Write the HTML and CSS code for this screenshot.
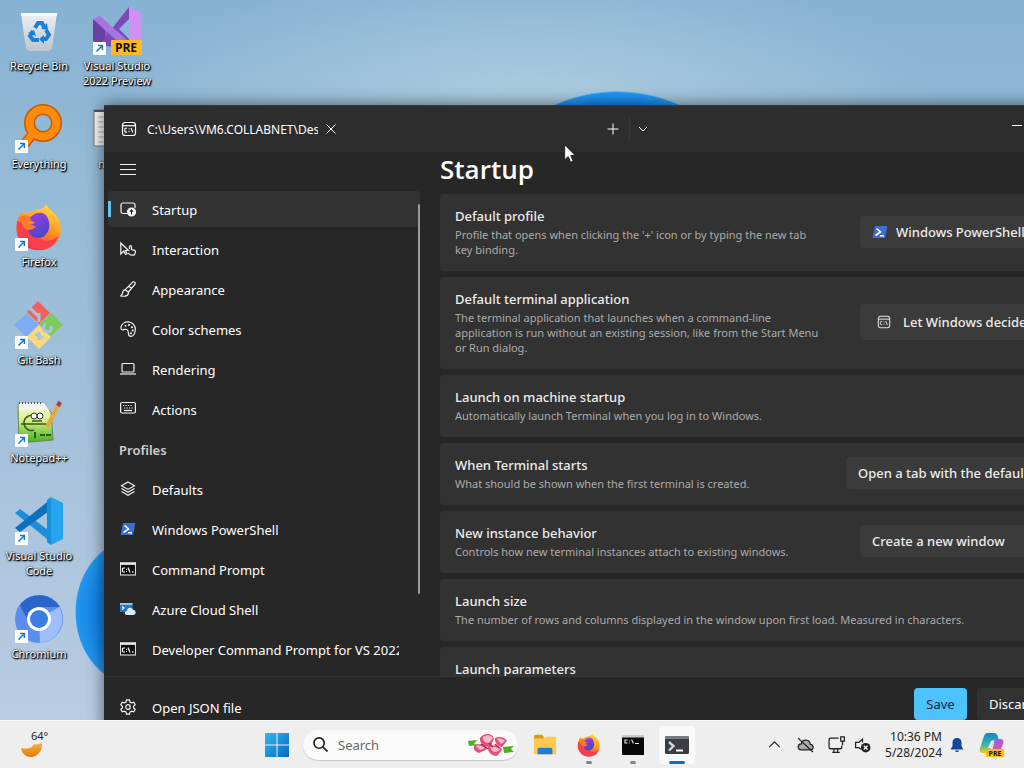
FILE: index.html
```html
<!DOCTYPE html>
<html lang="en">
<head>
<meta charset="utf-8">
<meta name="viewport" content="width=device-width, initial-scale=1">
<title>Terminal settings</title>
<link rel="stylesheet" href="styles.css">
</head>
<body>
<svg class="defs" aria-hidden="true">
  <defs>
    <linearGradient id="gBin" x1="0" y1="0" x2="0" y2="1"><stop offset="0" stop-color="#eef1f4"/><stop offset="1" stop-color="#bcc5ce"/></linearGradient>
    <linearGradient id="gFox" x1=".8" y1="0" x2=".3" y2="1"><stop offset="0" stop-color="#ffe14a"/><stop offset=".45" stop-color="#ff9a1e"/><stop offset="1" stop-color="#f0244f"/></linearGradient>
    <linearGradient id="gFoxIn" x1="0" y1="0" x2=".4" y2="1"><stop offset="0" stop-color="#a23be8"/><stop offset="1" stop-color="#4a48c8"/></linearGradient>
    <linearGradient id="gMoon" x1="0" y1="0" x2="0" y2="1"><stop offset="0" stop-color="#f7b23b"/><stop offset="1" stop-color="#e67a12"/></linearGradient>
    <linearGradient id="gWin" x1="0" y1="0" x2="1" y2="1"><stop offset="0" stop-color="#2bbdf0"/><stop offset="1" stop-color="#0a64c4"/></linearGradient>
    <linearGradient id="gNpp" x1="0" y1="0" x2="0" y2="1"><stop offset="0" stop-color="#f6fbe9"/><stop offset=".4" stop-color="#dcf08a"/><stop offset="1" stop-color="#3fae1c"/></linearGradient>
    <linearGradient id="gCopA" x1="0" y1="0" x2="0" y2="1"><stop offset="0" stop-color="#1a7fd4"/><stop offset=".55" stop-color="#2fb9a8"/><stop offset="1" stop-color="#f2c230"/></linearGradient>
    <linearGradient id="gCopB" x1="0" y1="0" x2="0" y2="1"><stop offset="0" stop-color="#a35be8"/><stop offset="1" stop-color="#f0567a"/></linearGradient>
    <symbol id="arrow" viewBox="0 0 13 13"><rect width="13" height="13" rx="1" fill="#fdfeff"/><path d="M3.5 9.5 9 4M5 3.6h4.4V8" fill="none" stroke="#1a78c8" stroke-width="1.5"/></symbol>
    <symbol id="ps" viewBox="0 0 16 14"><path d="M3 1h12.4L13 13H.6z" fill="#3b6fd0"/><path d="m4.500 3.500 4 3.500-5 3.500" fill="none" stroke="#fff" stroke-width="1.6"/><path d="M8 10.800h4" stroke="#fff" stroke-width="1.5"/></symbol>
    <symbol id="cmd" viewBox="0 0 16 13"><rect x=".5" y=".5" width="15" height="12" fill="#0c0c0c" stroke="#d5d5d5"/><path d="M0 1.2h16" stroke="#e8e8e8" stroke-width="2.4"/><path d="M5 5.5H3.2L2.5 6.2v2.6l.7.7H5M6.5 6.2v1M6.5 8.6v1M8 5l2 5M12 9.4h1.6" fill="none" stroke="#fff"/></symbol>
    <symbol id="term" viewBox="0 0 16 16"><rect x="1.5" y="1.5" width="13" height="13" rx="2.5" fill="none" stroke="#fff" stroke-width="1.2"/><path d="M1.5 4.7h13" stroke="#fff" stroke-width="1.2"/><path d="M6 7.3H4.5l-.7.7v2.4l.7.7H6M8 7.6v1M8 10.1v1M10 7l1.8 4.5" fill="none" stroke="#fff" stroke-width="1.1"/></symbol>
    <symbol id="fox" viewBox="0 0 48 48"><path d="M31 1c2 5 9 8 12 14 5 10 3 21-4 27-8 7-22 7-30 0C1 35-1 23 4 14c1-3 2-4 3-6 1 2 2 3 3 4 3-3 6-4 9-4 3-3 8-1 10-4 1-1 2-2 2-3z" fill="url(#gFox)"/><path d="M2 18C1 32 8 44 23 46c10 1 18-5 20-13-5 5-12 6-18 3C15 33 15 24 12 21z" fill="#f6404a"/><path d="M17 13c6-6 15-3 16 3 4 9-1 18-9 19-6 0-11-4-11-10 1-4 4-4 7-5-2-2-5-3-7-3 1-2 2-3 4-4z" fill="url(#gFoxIn)"/><path d="M5 14c4-3 8-2 11 2-1 2-3 3-4 5 4 0 6 1 9 3-2 1-4 3-8 3-3 0-7-5-8-13z" fill="#ff7a26"/></symbol>
  </defs>
</svg>

<div class="screen">
  <main class="desktop">
    <nav class="shortcuts" aria-label="Desktop">
      <a class="shortcut" href="#"><svg viewBox="0 0 48 48"><path d="M6 6h36l-5 36-3 2H14l-3-2z" fill="url(#gBin)"/><path d="M6 6h36v3H6z" fill="#f8fafb"/><path d="m20 21 3-5h4l2 4M31 23l3 5-3 4h-3M24 33h-6l-3-4 3-5" fill="none" stroke="#1b7fdb" stroke-width="4"/><path d="m32 16 1 7-7-1zM29 28v9l-5-5zM13 26l6-3 2 6z" fill="#1b7fdb"/></svg><span>Recycle Bin</span></a>
      <a class="shortcut" href="#"><svg viewBox="0 0 48 48"><path d="M0 13l6-3 27 26-9 8L0 26z" fill="#8f5bc9"/><path d="M0 13l6-3 6 5v20l-6 3-6-4z" fill="#6a3fa3"/><path d="M36 0v42L6 38z" fill="#7c49b8"/><path d="M36 0l12 5v36l-12 7z" fill="#cf91f4"/><path d="M0 12 7 9l34 30-5 6z" fill="#a874df"/><path d="m26 22 10-10v20z" fill="#8abadb"/><use href="#arrow" y="35" width="13" height="13"/><rect x="18" y="33" width="31" height="15" rx="1" fill="#fdb828"/><text x="33" y="45" class="pre">PRE</text></svg><span>Visual Studio<br>2022 Preview</span></a>
      <a class="shortcut" href="#"><svg viewBox="0 0 48 48"><path d="M17 30 8 41" stroke="#c65a00" stroke-width="10"/><circle cx="28" cy="18" r="13.5" fill="none" stroke="#c65a00" stroke-width="11"/><circle cx="28" cy="18" r="13.5" fill="none" stroke="#ff8a0c" stroke-width="8"/><path d="M19 27 8 41" stroke="#ff8a0c" stroke-width="7"/><use href="#arrow" y="35" width="13" height="13"/></svg><span>Everything</span></a>
      <a class="shortcut" href="#"><svg viewBox="0 0 48 48"><rect x="1" y="5" width="40" height="36" fill="#f8f8f8" stroke="#777"/><path d="M1 6h40" stroke="#555" stroke-width="2"/><path d="M5 12h32M5 17h32M5 22h32M5 27h32M5 32h32M5 37h32" stroke="#b5b5b5"/></svg><span>new.txt</span></a>
      <a class="shortcut" href="#"><svg viewBox="0 0 48 48"><use href="#fox" width="48" height="48"/><use href="#arrow" y="35" width="13" height="13"/></svg><span>Firefox</span></a>
      <span></span>
      <a class="shortcut" href="#"><svg viewBox="0 0 48 48"><path d="m23 0 12 12-11 11-12-12z" fill="#f0625a"/><path d="m36 12 12 12-13 12-11-12z" fill="#80c860"/><path d="m12 12 11 12-12 12L-1 24z" fill="#7fadf5"/><path d="m24 24 12 12-12 12-12-12z" fill="#fbd87a"/><path d="m15 7 9 9M24 12v9M31 23a4 4 0 1 0 5 2M24 31v8M20 33l8 4" stroke="#a9c4de" stroke-width="3" fill="none"/><use href="#arrow" y="35" width="13" height="13"/></svg><span>Git Bash</span></a>
      <span></span>
      <a class="shortcut" href="#"><svg viewBox="0 0 48 48"><path d="M3 5h25l8 8 2 28-34 3z" fill="url(#gNpp)" stroke="#6b8a50"/><path d="M4 4h25l5 7H4z" fill="#f4f4f0"/><path d="M4 4h24" stroke="#555" stroke-width="2" stroke-dasharray="1 2"/><path d="M21 18c-5-4-12 0-12 6 0 5 5 9 10 7M6 25h25M17 22h10" fill="none" stroke="#3b5a1b" stroke-width="1.500"/><circle cx="19" cy="17" r="3" fill="#fff" stroke="#333"/><circle cx="25" cy="17" r="3" fill="#fff" stroke="#333"/><path d="M20 33v6M25 36h5M31 36h5" stroke="#245c12" stroke-width="2"/><path d="m32 28 12-23" stroke="#e9a53a" stroke-width="4"/><path d="m43 7 2-4" stroke="#a33a49" stroke-width="4"/><use href="#arrow" y="35" width="13" height="13"/></svg><span>Notepad++</span></a>
      <span></span>
      <a class="shortcut" href="#"><svg viewBox="0 0 48 48"><path d="m0 16 5-4 32 24v10z" fill="#1b8edb"/><path d="m0 31 5 4L37 12V1z" fill="#0b70bd"/><path d="M36 0l12 6v36l-12 6z" fill="#24a5ee"/><path d="M36 0v48l-4-3V3z" fill="#1590dc"/><use href="#arrow" y="35" width="13" height="13"/></svg><span>Visual Studio<br>Code</span></a>
      <span></span>
      <a class="shortcut" href="#"><svg viewBox="0 0 48 48"><circle cx="24" cy="24" r="24" fill="#5b8def"/><path d="M24 24 44 12A24 24 0 0 1 25 48z" fill="#9dbdfb"/><path d="M24 12h21A24 24 0 0 0 5 10l9 18z" fill="#2a66c9"/><circle cx="24" cy="24" r="12" fill="#fff"/><circle cx="24" cy="24" r="9" fill="#3e7de0"/><use href="#arrow" y="35" width="13" height="13"/></svg><span>Chromium</span></a>
    </nav>

    <section class="window" aria-label="Terminal settings">
      <header class="titlebar">
        <div class="tab">
          <svg class="icon"><use href="#term"/></svg>
          <span class="tab-title">C:\Users\VM6.COLLABNET\Desktop</span>
          <button class="bare" aria-label="Close tab"><svg class="glyph" viewBox="0 0 12 12"><path d="m1.500 1.500 9 9m0-9-9 9"/></svg></button>
        </div>
        <button class="bare" aria-label="New tab"><svg class="glyph" viewBox="0 0 12 12"><path d="M6 .5v11M.5 6h11"/></svg></button>
        <span class="split"></span>
        <button class="bare" aria-label="Tab menu"><svg class="glyph" viewBox="0 0 12 12"><path d="m2 4 4 4 4-4"/></svg></button>
        <button class="bare minimize" aria-label="Minimize"><svg class="glyph" viewBox="0 0 12 12"><path d="M1 2.500h10"/></svg></button>
      </header>

      <div class="panes">
        <nav class="sidebar" aria-label="Settings">
          <button class="bare menu" aria-label="Navigation"><svg class="icon" viewBox="0 0 16 16"><path d="M0 3.500h16M0 8.500h16M0 13.500h16"/></svg></button>
          <div class="nav-list">
            <a class="nav-item current" href="#"><svg class="icon" viewBox="0 0 16 16"><path d="M7 12.500H3A2 2 0 0 1 1 10.500V4a2 2 0 0 1 2-2h10a2 2 0 0 1 2 2v3"/><circle cx="11.500" cy="11" r="4" fill="#fff"/><path d="M11.500 13.500V9M9.800 10.600l1.700-1.700 1.700 1.700" stroke="#2d2d2d"/></svg>Startup</a>
            <a class="nav-item" href="#"><svg class="icon" viewBox="0 0 16 16"><path d="M.8 2v11l3-3 1.700 3.500 1.500-.7-1.600-3.300H8.500zM9.500 8V5.500a1 1 0 0 1 2 0v3l2.500.7c1.200.3 1.600 1 1.400 2l-.6 1.800c-.3.800-.8 1.200-1.600 1.200h-1.700C10 14.200 9 12.800 8 11.800"/></svg>Interaction</a>
            <a class="nav-item" href="#"><svg class="icon" viewBox="0 0 16 16"><path d="M5.300 8.700 12.600 1.100c1.500-1 3.200.6 2.400 2L8.500 11M5.300 8.700l3.200 2.600M5.300 8.700c-2.300.2-2.600 2-3 4-.2 1-.7 1.500-1.500 2.300 4 .6 7.800.4 7.700-3.700M9 5.500l2.500 2"/></svg>Appearance</a>
            <a class="nav-item" href="#"><svg class="icon" viewBox="0 0 16 16"><path d="M1 6.500C1.500 2.500 5 .7 8.500.9 13 1.300 15.600 5 15.300 9c-.3 3.500-2 6.300-4.600 6.300-3.300 0-1.800-3.300-2.700-5.300C7.200 8.200 5 8 3.600 8.600 2 9.300.8 8.300 1 6.500z"/><g fill="#fff" stroke="none"><circle cx="5.500" cy="4.700" r="1"/><circle cx="9" cy="4" r="1"/><circle cx="12" cy="6.300" r="1"/><circle cx="12.700" cy="9.500" r="1"/><circle cx="11" cy="12.300" r="1"/></g></svg>Color schemes</a>
            <a class="nav-item" href="#"><svg class="icon" viewBox="0 0 16 16"><rect x="2" y="2.500" width="12" height="8.500" rx="1"/><path d="M0 13h16"/></svg>Rendering</a>
            <a class="nav-item" href="#"><svg class="icon" viewBox="0 0 16 16"><rect x=".6" y="1.500" width="14.800" height="10.500" rx="1.500"/><path d="M3 4.500h10M4 7h9" stroke-dasharray="1.200 1.300"/><path d="M4 9.500h8"/></svg>Actions</a>
            <h2 class="nav-heading">Profiles</h2>
            <a class="nav-item" href="#"><svg class="icon" viewBox="0 0 16 16"><path d="m8 1 6.500 3.700L8 8.400 1.500 4.700zM1.500 7.600 8 11.300l6.500-3.700M1.500 10.500 8 14.200l6.500-3.700"/></svg>Defaults</a>
            <a class="nav-item" href="#"><svg class="icon"><use href="#ps"/></svg>Windows PowerShell</a>
            <a class="nav-item" href="#"><svg class="icon"><use href="#cmd"/></svg>Command Prompt</a>
            <a class="nav-item" href="#"><svg class="icon plain" viewBox="0 0 16 16"><path d="M0 2h12.500v9H0z" fill="#2878c8"/><path d="M0 2h12.500v2H0z" fill="#8fc6ee"/><path d="m2 5.500 2 1.500-2 1.500" fill="none" stroke="#fff"/><path d="M7 14c-3 0-3-4 0-4 0-4 5-4.500 6-1.200 3.500.2 3.500 5.200 0 5.200z" fill="#d9eefc"/></svg>Azure Cloud Shell</a>
            <a class="nav-item" href="#"><svg class="icon"><use href="#cmd"/></svg><span class="clip">Developer Command Prompt for VS 2022</span></a>
          </div>
          <div class="sidebar-foot">
            <a class="nav-item" href="#"><svg class="icon" viewBox="0 0 16 16"><path d="M6.500.8h3l.5 2.200 1.500.8 2.200-.7 1.500 2.600L13.600 7.200v1.700l1.600 1.400-1.500 2.600-2.200-.7-1.500.9-.5 2.100h-3L6 13.100l-1.500-.9-2.200.7L.8 10.300l1.600-1.400V7.200L.8 5.700l1.500-2.600 2.200.7L6 3z"/><circle cx="8" cy="8" r="2.300"/></svg>Open JSON file</a>
          </div>
        </nav>

        <div class="content">
          <h1>Startup</h1>
          <div class="cards">
            <div class="card">
              <div class="text"><label for="profile">Default profile</label><p>Profile that opens when clicking the '+' icon or by typing the new tab key binding.</p></div>
              <div class="combo"><svg class="icon"><use href="#ps"/></svg><select id="profile"><option>Windows PowerShell</option></select></div>
            </div>
            <div class="card">
              <div class="text"><label for="app">Default terminal application</label><p>The terminal application that launches when a command-line application is run without an existing session, like from the Start Menu or Run dialog.</p></div>
              <div class="combo roomy"><svg class="icon small"><use href="#term"/></svg><select id="app"><option>Let Windows decide</option></select></div>
            </div>
            <div class="card">
              <div class="text"><h3>Launch on machine startup</h3><p>Automatically launch Terminal when you log in to Windows.</p></div>
            </div>
            <div class="card">
              <div class="text"><label for="start">When Terminal starts</label><p>What should be shown when the first terminal is created.</p></div>
              <div class="combo wide"><select id="start"><option>Open a tab with the default profile</option></select></div>
            </div>
            <div class="card">
              <div class="text"><label for="instance">New instance behavior</label><p>Controls how new terminal instances attach to existing windows.</p></div>
              <div class="combo"><select id="instance"><option>Create a new window</option></select></div>
            </div>
            <div class="card">
              <div class="text"><h3>Launch size</h3><p>The number of rows and columns displayed in the window upon first load. Measured in characters.</p></div>
            </div>
            <div class="card">
              <div class="text"><h3>Launch parameters</h3></div>
            </div>
          </div>
          <footer class="actions">
            <button class="btn primary">Save</button>
            <button class="btn">Discard changes</button>
          </footer>
        </div>
      </div>
    </section>

    <svg class="pointer" viewBox="0 0 12 19" aria-hidden="true"><path d="M.7.8v15l3.500-3.300 2.500 5.700 2.500-1.100-2.500-5.500h4.600z" fill="#fff" stroke="#111" stroke-width=".8"/></svg>
  </main>

  <footer class="taskbar">
    <button class="bare weather" aria-label="Weather"><svg viewBox="0 0 24 16"><path d="M1 6c5 1 11 1 13-4 3 1 6 0 8-1 1 8-5 14-11 14C6 15 2 12 1 6z" fill="url(#gMoon)"/></svg><span>64°</span></button>
    <div class="apps">
      <button class="bare app start" aria-label="Start"><svg viewBox="0 0 24 24"><path d="M0 0h11.500v11.500H0zM12.500 0H24v11.500H12.500zM0 12.500h11.500V24H0zM12.500 12.500H24V24H12.500z" fill="url(#gWin)"/></svg></button>
      <label class="search">
        <svg class="lens" viewBox="0 0 16 16"><circle cx="6.500" cy="6.500" r="5.500"/><path d="m10.500 10.500 5 5"/></svg>
        <input type="text" placeholder="Search" aria-label="Search">
        <svg class="flowers" viewBox="0 0 48 24"><path d="m1 8 9-1-3 4 6 1-11 1zM36 14l11-1-3 3 3 3-10 1z" fill="#4fae1e"/><g fill="#e2517c"><path d="M13 5c4-6 13-5 14 1l-4 8c-6 0-11-4-10-9zM7 13c4-3 12-2 13 3l-8 4c-4-1-6-4-5-7zM28 5c4-2 10-1 12 3l-5 6c-4 0-8-5-7-9zM21 14c5-3 13-1 14 3l-5 6c-5 0-10-4-9-9z"/></g><g fill="#fbb9c9"><path d="M16 4c4-3 8-2 10 1l-4 5c-4 0-7-3-6-6zM9 13c3-1 7 0 9 2l-5 2zM30 6c3-1 6 0 8 2l-4 3zM23 14c4-1 9 0 10 3l-4 2c-3 0-5-2-6-5z"/></g><path d="m14 11 7 5M28 11l4 4M22 10l4 4" stroke="#b82750" stroke-width="1.500"/></svg>
      </label>
      <button class="bare app" aria-label="File Explorer"><svg viewBox="0 0 26 24"><path d="M1 3a2 2 0 0 1 2-2h7l2 3v4H1z" fill="#d59a1c"/><path d="M1 5h10l3-2h10a1 1 0 0 1 1 1v18H1z" fill="#fcca4e"/><path d="M5 22v-5a2 2 0 0 1 2-2h12a2 2 0 0 1 2 2v5z" fill="#1f7ed0"/></svg></button>
      <button class="bare app open" aria-label="Firefox"><svg viewBox="0 0 24 24"><use href="#fox" width="24" height="24"/></svg></button>
      <button class="bare app open" aria-label="Command Prompt"><svg viewBox="0 0 24 24"><path d="M1 3h22v19H1z" fill="#080808"/><path d="M1 2h22v2.500H1z" fill="#c9c9c9"/><path d="M6.500 7H4v3h2.500M8.500 7.500v.8M8.500 9.500v.8M10.500 6.500l2 4M14 10.500h4" fill="none" stroke="#eee" stroke-width="1.100"/></svg></button>
      <button class="bare app active" aria-label="Terminal"><svg viewBox="0 0 24 24"><rect y="3" width="24" height="18" rx="1.500" fill="#3a3d42"/><path d="M0 4.500A1.500 1.500 0 0 1 1.500 3h21A1.500 1.500 0 0 1 24 4.500V6H0z" fill="#777c82"/><path d="m4 9 4.500 4L4 17.500" fill="none" stroke="#d5d5d5" stroke-width="2.400"/><path d="M11 17.500h7" stroke="#fff" stroke-width="2"/></svg></button>
    </div>
    <div class="tray">
      <button class="bare" aria-label="Hidden icons"><svg class="tray-icon" viewBox="0 0 16 16"><path d="m3 10.500 5-5 5 5"/></svg></button>
      <button class="bare" aria-label="OneDrive"><svg class="tray-icon" viewBox="0 0 16 16"><path d="M4 13h8.500c3.500 0 3.500-5 0-5.200C12 3 5 2.500 4 7.500.2 7.800 0 13 4 13z" fill="#aaa"/><path d="M1 2l14 13"/></svg></button>
      <button class="bare" aria-label="Network"><svg class="tray-icon" viewBox="0 0 16 16"><path d="M10 2H2.500A1.500 1.500 0 0 0 1 3.500v7A1.500 1.500 0 0 0 2.500 12h9a1.500 1.500 0 0 0 1.500-1.500V9M5.500 12v3.500M9 12v3.500M4 15.500h7M12 .8h3.400v4H12zM13.700 5v3.500"/></svg></button>
      <button class="bare volume" aria-label="Volume"><svg class="tray-icon" viewBox="0 0 16 16"><path d="M8 6V3L4.500 6H1.500v5h3l2 1.500"/><circle cx="11" cy="11" r="4.500" fill="#222" stroke="none"/><path d="m9.200 9.200 3.600 3.600m0-3.600-3.600 3.600" stroke="#fff"/></svg></button>
      <button class="bare clock"><time>10:36 PM</time><time>5/28/2024</time></button>
      <button class="bare alerts" aria-label="Notifications"><svg class="tray-icon bell" viewBox="0 0 16 16"><path d="M8 1c-3 0-4.500 2-4.500 4.500V9L1.500 12.500h13L12.500 9V5.500C12.500 3 11 1 8 1zM6 13.500h4c-.5 2-3.500 2-4 0z"/></svg></button>
      <button class="bare copilot" aria-label="Copilot"><svg viewBox="0 0 26 26"><path d="M8 1h7c2 0 3 1 4 4l1 4h-5l-3 7c-1 3-2 5-5 5H4c-3 0-4-2-3-5L5 4c1-2 2-3 3-3z" fill="url(#gCopA)"/><path d="M16 7h5c3 0 4 2 3 5l-3 8c-1 2-2 3-4 3h-7c2 0 2-2 3-4z" fill="url(#gCopB)"/><path d="m12 9 3-1-3 8H9z" fill="#eef"/><rect x="7" y="17" width="18" height="8" fill="#fbb917"/><text x="16" y="24" class="pre tiny">PRE</text></svg></button>
    </div>
  </footer>
</div>
</body>
</html>
```

FILE: styles.css
```css
* { box-sizing: border-box; }

body {
  margin: 0;
  font-family: "Noto Sans", "Open Sans", sans-serif;
  font-size: 13px;
  color: #fff;
}

h1, h2, h3, p { margin: 0; }
a { color: inherit; text-decoration: none; }
button, input, select { font: inherit; color: inherit; }

.defs { position: absolute; width: 0; height: 0; }

.bare {
  display: flex;
  align-items: center;
  justify-content: center;
  padding: 0;
  border: 0;
  background: none;
}

.screen {
  display: flex;
  flex-direction: column;
  height: 100vh;
  overflow: hidden;
}

/* Desktop */
.desktop {
  position: relative;
  flex: 1;
  min-height: 0;
  overflow: hidden;
  background:
    radial-gradient(ellipse 62px 74px at 137px 612px, #1462cc 0, #1585e6 70%, #2196ee 98%, transparent 100%),
    radial-gradient(circle 154px at 617px 245px, #0b63d8 0, #1282ee 90%, #2199f5 99%, transparent 100%),
    radial-gradient(ellipse 420px 150px at 530px 110px, #aecde0 0, transparent 100%),
    linear-gradient(180deg, #86b2d3 0, #96bbd6 25%, #a3c0da 55%, #b8cce3 100%);
}

.shortcuts {
  display: grid;
  grid-template-columns: 78px 78px;
  grid-auto-rows: 98px;
}

.shortcut {
  display: flex;
  flex-direction: column;
  align-items: center;
  gap: 3px;
  padding-top: 7px;
  font-size: 11px;
  line-height: 15px;
  text-align: center;
  white-space: nowrap;
  text-shadow: 0 0 2px #000, 1px 1px 2px #000, 1px 1px 1px #000;
}

.shortcut svg { width: 48px; height: 48px; flex: none; overflow: visible; }

.pre {
  font: 700 12px "Open Sans", sans-serif;
  fill: #111;
  text-anchor: middle;
  text-shadow: none;
}
.pre.tiny { font-size: 7px; }

.pointer { position: absolute; left: 564px; top: 144px; width: 12px; height: 19px; }

/* Settings window */
.window {
  position: absolute;
  left: 104px;
  right: -120px;
  top: 105px;
  bottom: -20px;
  display: flex;
  flex-direction: column;
  background: #272727;
  border-top: 1px solid #343b3c;
  box-shadow: 0 0 16px rgba(0, 0, 0, .55);
}

.titlebar {
  display: flex;
  align-items: center;
  height: 46px;
  background: #2d2d2d;
}

.tab { display: flex; align-items: center; width: 496px; padding-left: 17px; }
.tab-title {
  width: 171px;
  margin: 0 6px 0 10px;
  overflow: hidden;
  white-space: nowrap;
  font-size: 12px;
}
.split { width: 1px; height: 24px; margin-left: 3px; background: #383838; }
.minimize { margin-left: auto; margin-right: 121px; }

.icon {
  width: 16px;
  height: 16px;
  flex: none;
  fill: none;
  stroke: #f2f2f2;
  stroke-width: 1.200;
}
.icon use, .plain { stroke: none; }
.icon.small { width: 14px; height: 14px; opacity: .85; }
.glyph { width: 12px; height: 12px; fill: none; stroke: #fff; }
.titlebar .bare { width: 26px; height: 32px; }
.titlebar .minimize { width: 12px; }
.titlebar .tab .bare { width: 14px; }

.panes {
  flex: 1;
  min-height: 0;
  display: grid;
  grid-template-columns: 336px 1fr;
  grid-template-rows: 100%;
}

.sidebar { display: flex; flex-direction: column; min-height: 0; }
.menu { width: 16px; height: 16px; margin: 9px 16px 12px; flex: none; }

.nav-list {
  position: relative;
  flex: 1;
  min-height: 0;
  display: flex;
  flex-direction: column;
  gap: 4px;
  padding: 2px 20px 0 4px;
  overflow: hidden;
}
.nav-list::after {
  content: "";
  position: absolute;
  right: 20px;
  top: 15px;
  width: 2px;
  height: 390px;
  border-radius: 1px;
  background: #9b9b9b;
}

.nav-item {
  flex: none;
  display: flex;
  align-items: center;
  gap: 16px;
  height: 36px;
  padding: 2px 20px 0 12px;
  border-radius: 4px;
  line-height: 20px;
  white-space: nowrap;
}
.nav-item.current {
  background: linear-gradient(#60c2f5, #60c2f5) 0 50% / 3px 16px no-repeat, #333;
}
.nav-item .icon { margin-bottom: 2px; }
.nav-heading {
  flex: none;
  height: 36px;
  padding: 2px 0 0 11px;
  font-size: 13px;
  font-weight: 600;
  line-height: 34px;
  color: #cfcfcf;
}
.clip { overflow: hidden; width: 247px; }

.sidebar-foot { height: 64px; flex: none; padding: 12px 4px 0; border-top: 1px solid #363636; }

.content { display: flex; flex-direction: column; min-width: 0; min-height: 0; }

h1 { flex: none; padding-bottom: 8px; font: 600 26px/34px "Open Sans", sans-serif; }

.cards {
  flex: 1;
  min-height: 0;
  display: flex;
  flex-direction: column;
  gap: 6px;
  margin-right: 20px;
  overflow: hidden;
}

.card {
  flex: none;
  display: flex;
  align-items: center;
  gap: 36px;
  padding: 12px 16px 14px 15px;
  border-radius: 4px;
  background: #323232;
}
.text { flex: 1; min-width: 0; }
.card label, .card h3 { display: block; font-size: 13px; font-weight: 500; line-height: 21px; color: #ececec; }
.card p { font-size: 11px; line-height: 15px; color: #ababab; }

.combo {
  display: flex;
  align-items: center;
  gap: 8px;
  width: 248px;
  height: 32px;
  padding-left: 12px;
  border-radius: 4px;
  background: #3b3b3b;
}
.combo.roomy { gap: 12px; padding-left: 17px; height: 36px; }
.combo.wide { width: 262px; }
.combo select {
  flex: 1;
  min-width: 0;
  padding: 0;
  border: 0;
  background: none;
  appearance: none;
  font-weight: 500;
  color: #ececec;
}

.actions {
  flex: none;
  display: flex;
  justify-content: flex-end;
  align-items: flex-start;
  gap: 10px;
  height: 64px;
  padding: 11px 32px 0 0;
  border-top: 1px solid #363636;
}
.btn {
  width: 135px;
  height: 32px;
  padding: 0 12px;
  border: 0;
  border-radius: 4px;
  background: #323232;
  text-align: left;
  white-space: nowrap;
}
.btn.primary { width: 53px; padding: 0; background: #4cc2ff; color: #0b2b3c; text-align: center; }

/* Taskbar */
.taskbar {
  flex: none;
  display: flex;
  align-items: center;
  height: 48px;
  border-top: 1px solid #f8f8f8;
  background: #eeeeee;
  color: #222;
}

.weather {
  position: relative;
  align-items: flex-end;
  width: 24px;
  height: 26px;
  margin: 0 209px 0 20px;
}
.weather svg { width: 24px; height: 16px; }
.weather span { position: absolute; left: 11px; top: -3px; font-size: 11px; line-height: 14px; }

.apps { display: flex; align-items: center; }
.app { position: relative; width: 36px; height: 38px; margin: 0 4px; }
.app svg { width: 24px; height: 24px; }
.start { width: 48px; margin: 0 2px 0 0; }
.app.open::after, .app.active::after {
  content: "";
  position: absolute;
  left: 15px;
  bottom: 0;
  width: 6px;
  height: 3px;
  border-radius: 2px;
  background: #858585;
}
.app.active { background: #f9f9f9; border-radius: 4px; }
.app.active::after { left: 10px; width: 16px; background: #0a6fc2; }

.search {
  display: flex;
  align-items: center;
  gap: 10px;
  width: 215px;
  height: 30px;
  margin-right: 5px;
  padding: 0 3px 0 10px;
  border-radius: 15px;
  background: #fafafa;
  box-shadow: 0 1px 1px #c6c6c6;
}
.search input { flex: 1; min-width: 0; padding: 0; border: 0; outline: 0; background: none; }
.search input::placeholder { color: #666; opacity: 1; }
.lens { width: 15px; height: 15px; flex: none; fill: none; stroke: #222; stroke-width: 1.800; }
.flowers { width: 48px; height: 24px; flex: none; }

.tray { display: flex; align-items: center; margin-left: auto; margin-right: 19px; }
.tray .bare { margin-left: 14px; }
.tray .volume { margin-left: 9px; }
.tray-icon { width: 17px; height: 17px; fill: none; stroke: #222; stroke-width: 1.200; }
.tray-icon.bell { width: 16px; height: 16px; fill: #12479c; stroke: none; }
.tray .clock {
  flex-direction: column;
  align-items: flex-end;
  font-size: 12px;
  line-height: 16px;
}
.tray .alerts { margin-left: 7px; }
.copilot svg { width: 26px; height: 26px; }
```
